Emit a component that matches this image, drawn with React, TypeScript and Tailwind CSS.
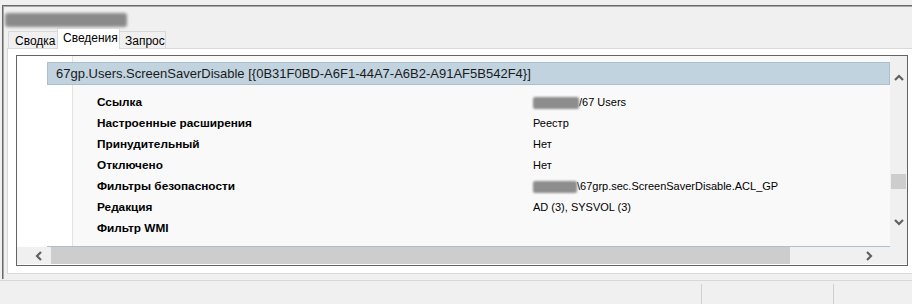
import React from "react";

const rows: { label: string; value: React.ReactNode }[] = [
  { label: "Ссылка", value: <><Redacted w="w-[46px]" />/67 Users</> },
  { label: "Настроенные расширения", value: "Реестр" },
  { label: "Принудительный", value: "Нет" },
  { label: "Отключено", value: "Нет" },
  { label: "Фильтры безопасности", value: <><Redacted w="w-[44px]" />\67grp.sec.ScreenSaverDisable.ACL_GP</> },
  { label: "Редакция", value: "AD (3), SYSVOL (3)" },
  { label: "Фильтр WMI", value: "" },
];

function Redacted({ w }: { w: string }) {
  return <span className={`inline-block h-[12px] ${w} rounded-[2px] bg-[#8d8d8d] blur-[1px] align-middle`} />;
}

function Chevron({ dir }: { dir: "up" | "down" | "left" | "right" }) {
  const d = {
    up: "M1 6 L5 2 L9 6",
    down: "M1 2 L5 6 L9 2",
    left: "M6 1 L2 5 L6 9",
    right: "M2 1 L6 5 L2 9",
  }[dir];
  const vertical = dir === "up" || dir === "down";
  return (
    <svg width={vertical ? 10 : 8} height={vertical ? 8 : 10} viewBox={vertical ? "0 0 10 8" : "0 0 8 10"}>
      <path d={d} fill="none" stroke="#606060" strokeWidth="2.2" />
    </svg>
  );
}

export default function App() {
  return (
    <div className="flex h-[304px] w-[912px] flex-col overflow-hidden bg-[#f0f0f0] font-['Liberation_Sans',Arial,sans-serif] text-black">
      <div className="h-[5px]" />
      {/* window frame */}
      <div className="ml-[2px] h-[274px] w-[940px] border-l border-t border-[#696969]">
        <div className="flex h-full flex-col border-l border-t border-[#a8a8a8] bg-[#f0f0f0]">
          {/* title */}
          <div className="flex h-[21px] items-end pl-[1px]">
            <div className="mb-[1px] h-[14px] w-[122px] rounded-[3px] bg-[#8a8a8a] blur-[1.5px]" />
          </div>
          {/* tabs */}
          <div className="flex h-[20px] items-end pl-[4px] text-[12px] leading-none">
            <div className="flex h-[17px] w-[49px] items-center border-l border-t border-[#d9d9d9] pl-[6px] pt-[1px]">Сводка</div>
            <div className="relative z-10 -mb-px flex h-[21px] w-[63px] items-center border-l border-r border-t border-[#d9d9d9] bg-white pb-[2px] pl-[5px]">
              Сведения
            </div>
            <div className="flex h-[17px] w-[46px] items-center border-r border-t border-[#d9d9d9] pl-[5px] pt-[1px]">Запрос</div>
          </div>
          {/* panel */}
          <div className="ml-[3px] h-[226px] border border-[#d9d9d9] bg-white pl-[8px] pt-[6px]">
            <div className="flex h-[211px] w-[892px] flex-col border border-[#646464]">
              <div className="flex h-[191px]">
                {/* content */}
                <div className="flex w-[873px] overflow-hidden">
                  <div className="w-[56px] shrink-0 border-r border-[#e3e3e3] bg-white" />
                  <div className="flex flex-1 flex-col bg-[#f9f9f9]">
                    <div className="relative z-10 ml-[-26px] mt-[6px] flex h-[23px] shrink-0 items-center border border-[#aebecb] bg-[#c1d3df] pl-[8px] text-[13px] text-[#1a1a1a]">
                      67gp.Users.ScreenSaverDisable [{"{"}0B31F0BD-A6F1-44A7-A6B2-A91AF5B542F4{"}"}]
                    </div>
                    <div className="mt-[7px] flex flex-col text-[11px]">
                      {rows.map((r) => (
                        <div key={r.label} className="flex h-[21px] shrink-0 items-center">
                          <div className="w-[460px] shrink-0 pl-[24px] text-[11.8px] font-bold">{r.label}</div>
                          <div className="flex items-center">{r.value}</div>
                        </div>
                      ))}
                    </div>
                    <div className="relative z-10 ml-[-26px] mt-[7px] h-[23px] shrink-0 border border-[#aebecb] bg-[#c1d3df]" />
                  </div>
                </div>
                {/* vertical scrollbar */}
                <div className="flex w-[17px] flex-col items-center bg-[#f0f0f0]">
                  <div className="mt-[18px]">
                    <Chevron dir="up" />
                  </div>
                  <div className="mt-[92px] h-[15px] w-[15px] bg-[#cdcdcd]" />
                  <div className="mt-[29px]">
                    <Chevron dir="down" />
                  </div>
                </div>
              </div>
              {/* horizontal scrollbar */}
              <div className="flex h-[17px] items-center bg-[#f0f0f0]">
                <div className="flex w-[34px] justify-end pr-[8px]">
                  <Chevron dir="left" />
                </div>
                <div className="h-[17px] w-[739px] bg-[#cdcdcd]" />
                <div className="flex w-[100px] justify-end pr-[17px]">
                  <Chevron dir="right" />
                </div>
              </div>
            </div>
          </div>
        </div>
      </div>
      {/* status bar */}
      <div className="mt-[1px] flex flex-1 border-t border-[#d7d7d7] pt-[3px]">
        <div className="w-[702px] border-r border-[#d0d0d0]" />
        <div className="w-[132px] border-r border-[#d0d0d0]" />
      </div>
    </div>
  );
}
